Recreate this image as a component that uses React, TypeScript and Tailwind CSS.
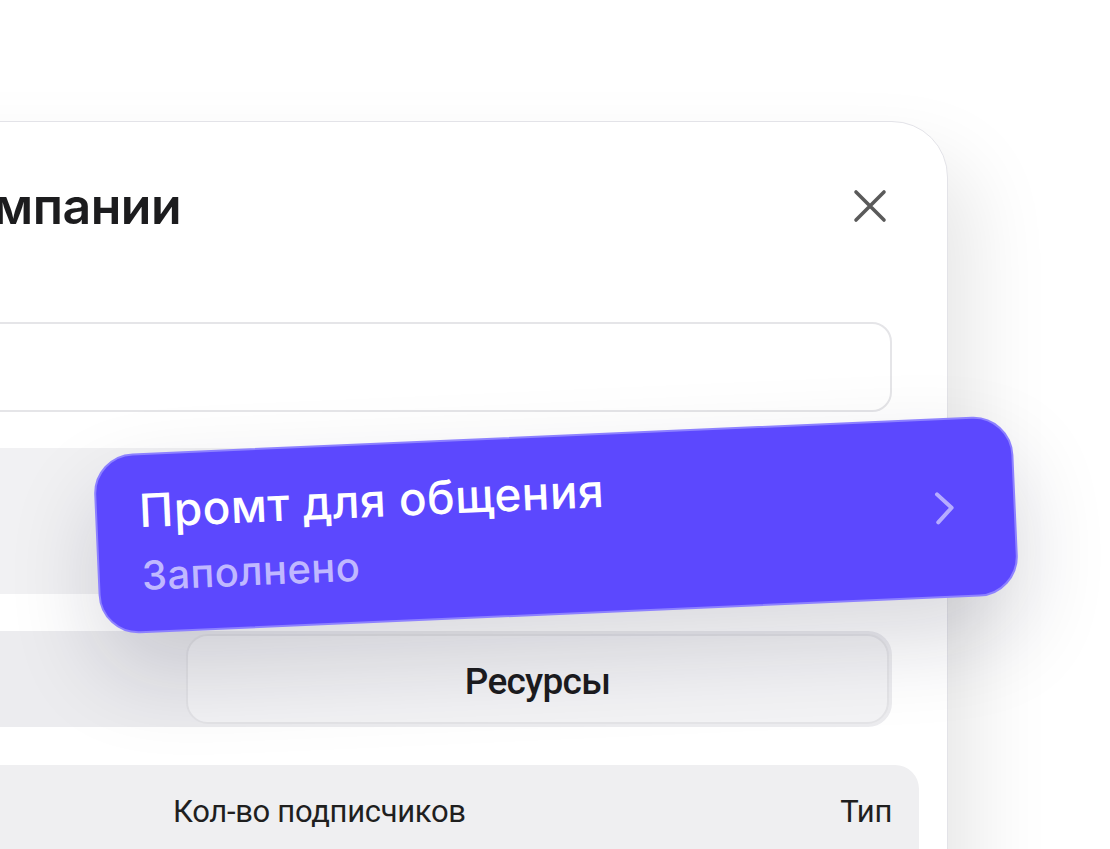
import React from "react";

export default function App() {
  return (
    <div className="relative w-[1110px] h-[849px] overflow-hidden bg-white font-['Inter',sans-serif]">
      <div className="pt-[121px]">
        <div className="ml-[-571px] w-[1519px] h-[900px] bg-white border border-[#e3e3e8] rounded-tr-[56px] shadow-[24px_40px_80px_rgba(0,0,0,0.10)] pt-[52px] px-[55px]">
          {/* header */}
          <div className="flex items-center h-[64px]">
            <div className="w-[696px] flex justify-end overflow-visible">
              <h1 className="whitespace-nowrap text-[50px] leading-[62px] font-semibold text-[#1c1c1e] tracking-[-0.01em]">
                Настройки кампании
              </h1>
            </div>
            <div className="flex-1" />
            <button className="w-[44px] h-[44px] flex items-center justify-center">
              <svg width="34" height="34" viewBox="0 0 34 34" fill="none">
                <path d="M3 3L31 31M31 3L3 31" stroke="#5a5a5a" strokeWidth="3.6" strokeLinecap="round" />
              </svg>
            </button>
          </div>

          {/* input */}
          <div className="mt-[84px] h-[90px] rounded-[20px] border-2 border-[#e5e5e8] bg-white" />

          {/* gray row */}
          <div className="mt-[36px] h-[146px] rounded-[24px] bg-[#f1f1f3]" />

          {/* segmented */}
          <div className="mt-[37px] h-[96px] rounded-[24px] bg-[#ececef] p-[3px] flex">
            <div className="flex-1 flex items-center justify-center text-[32px] font-medium text-[#6b6b70]">
              Описание
            </div>
            <div className="w-[703px] pt-[6px] rounded-[22px] bg-[#f3f3f5] border-2 border-[#e4e4e7] flex items-center justify-center text-[37px] font-medium text-[#1c1c1e] tracking-[-0.02em] font-['Roboto',sans-serif]">
              Ресурсы
            </div>
          </div>

          {/* table header */}
          <div className="mt-[38px] mr-[-27px] h-[90px] pt-[4px] rounded-t-[24px] bg-[#efeff1] flex items-center text-[31px] text-[#1f1f1f] font-['Roboto',sans-serif] tracking-[-0.01em]">
            <div className="w-[688px] pl-[27px]">Название</div>
            <div>Кол-во подписчиков</div>
            <div className="flex-1" />
            <div className="pr-[27px]">Тип</div>
          </div>
        </div>
      </div>

      {/* floating purple card */}
      <div className="absolute left-[96px] top-[435px] w-[920px] h-[180px] rotate-[-2.5deg] rounded-[40px] bg-[#5c48fe] border-2 border-[#8d81ff] shadow-[0_40px_90px_rgba(20,20,50,0.16)] flex items-center">
        <div className="flex-1 pl-[42px] self-start">
          <div className="pt-[29px] text-[46px] leading-[52px] font-medium text-white tracking-[0.01em]">
            Промт для общения
          </div>
          <div className="mt-[17px] text-[40px] leading-[46px] font-medium text-[#c0b8ff] tracking-[0.01em]">
            Заполнено
          </div>
        </div>
        <div className="pr-[58px]">
          <svg width="22" height="36" viewBox="0 0 22 36" fill="none">
            <path d="M4 4L18 18L4 32" stroke="#b6acff" strokeWidth="4" strokeLinecap="round" strokeLinejoin="round" />
          </svg>
        </div>
      </div>
    </div>
  );
}
